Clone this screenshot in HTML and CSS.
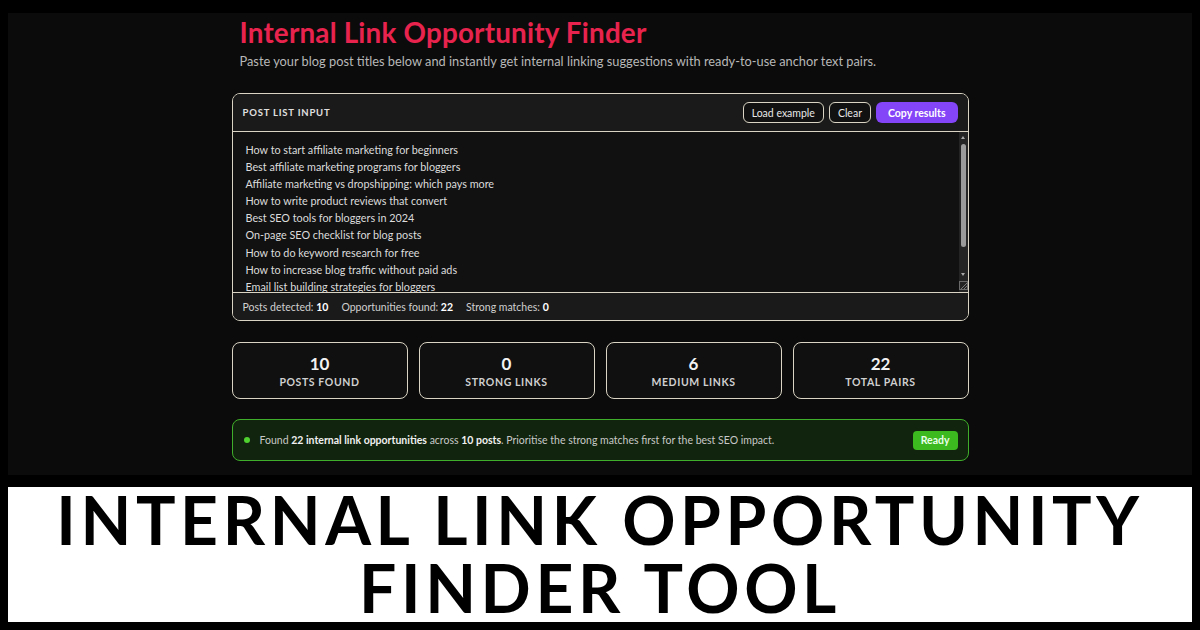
FILE: index.html
```html
<!DOCTYPE html>
<html lang="en">
<head>
<meta charset="utf-8">
<title>Internal Link Opportunity Finder</title>
<link rel="stylesheet" href="styles.css">
</head>
<body>
<div class="panel">
  <div class="col">
    <h1 class="title">Internal Link Opportunity Finder</h1>
    <p class="subtitle">Paste your blog post titles below and instantly get internal linking suggestions with ready-to-use anchor text pairs.</p>

    <section class="card">
      <div class="card-head">
        <span class="card-label">POST LIST INPUT</span>
        <div class="actions">
          <button class="btn btn-outline">Load example</button>
          <button class="btn btn-outline">Clear</button>
          <button class="btn btn-primary">Copy results</button>
        </div>
      </div>
      <div class="input-area">
        <textarea class="posts" spellcheck="false">How to start affiliate marketing for beginners
Best affiliate marketing programs for bloggers
Affiliate marketing vs dropshipping: which pays more
How to write product reviews that convert
Best SEO tools for bloggers in 2024
On-page SEO checklist for blog posts
How to do keyword research for free
How to increase blog traffic without paid ads
Email list building strategies for bloggers
How to monetise a blog with affiliate links</textarea>
        <div class="sb" aria-hidden="true">
          <span class="sb-up"></span>
          <span class="sb-thumb"></span>
          <span class="sb-fill"></span>
          <span class="sb-down"></span>
          <span class="sb-grip"></span>
        </div>
      </div>
      <div class="card-foot">
        <span>Posts detected: <b>10</b></span>
        <span>Opportunities found: <b>22</b></span>
        <span>Strong matches: <b>0</b></span>
      </div>
    </section>

    <div class="stats">
      <div class="stat"><div class="num">10</div><div class="lbl">POSTS FOUND</div></div>
      <div class="stat"><div class="num">0</div><div class="lbl">STRONG LINKS</div></div>
      <div class="stat"><div class="num">6</div><div class="lbl">MEDIUM LINKS</div></div>
      <div class="stat"><div class="num">22</div><div class="lbl">TOTAL PAIRS</div></div>
    </div>

    <div class="banner">
      <span class="dot"></span>
      <span class="msg">Found <b>22 internal link opportunities</b> across <b>10 posts</b>. Prioritise the strong matches first for the best SEO impact.</span>
      <span class="pill">Ready</span>
    </div>
  </div>
</div>
<div class="caption">
  <h2 class="cap-line">INTERNAL LINK OPPORTUNITY</h2>
  <h2 class="cap-line">FINDER TOOL</h2>
</div>
</body>
</html>
```

FILE: styles.css
```css
* { box-sizing: border-box; }
html, body { margin: 0; padding: 0; }
body {
  width: 1200px;
  height: 630px;
  background: #000;
  font-family: "Lato", "Open Sans", sans-serif;
  color: #e6e6e6;
  overflow: hidden;
  padding: 13px 8px 0;
}
.panel {
  height: 462px;
  background: #0b0b0b;
  display: flex;
  justify-content: center;
}
.col {
  width: 737px;
  padding-top: 3px;
}
.title {
  margin: 0 0 0 8px;
  font-size: 27.8px;
  font-weight: 700;
  color: #e8234d;
  line-height: 34px;
  letter-spacing: 0.2px;
}
.subtitle {
  margin: 2px 0 0 8px;
  font-size: 12.8px;
  color: #b8b8b8;
  line-height: 18px;
}
.card {
  margin-top: 23px;
  border: 1.5px solid #d9d4c3;
  border-radius: 8px;
  background: #111;
  overflow: hidden;
  display: flex;
  flex-direction: column;
}
.card-head {
  height: 38px;
  background: #1a1a1a;
  border-bottom: 1.5px solid #d9d4c3;
  display: flex;
  align-items: center;
  justify-content: space-between;
  padding: 0 10px 0 10px;
}
.card-label {
  font-size: 9.5px;
  font-weight: 700;
  letter-spacing: 0.8px;
  color: #e0e0e0;
}
.actions { display: flex; gap: 5px; }
.btn {
  font-family: inherit;
  font-size: 10.5px;
  height: 21px;
  border-radius: 6px;
  padding: 0 8px;
  cursor: pointer;
}
.btn-outline {
  background: #111;
  color: #e8e8e8;
  border: 1.5px solid #d9d4c3;
}
.btn-primary {
  background: #8345f7;
  color: #fff;
  border: none;
  font-weight: 700;
  padding: 0 12px;
}
.input-area {
  display: flex;
  height: 160px;
  background: #111;
}
.posts {
  flex: 1;
  display: block;
  height: 100%;
  margin: 0;
  border: none;
  outline: none;
  resize: none;
  background: #111;
  color: #dcdcdc;
  font-family: inherit;
  font-size: 10.8px;
  line-height: 17.1px;
  padding: 9px 13px 0;
  overflow: hidden;
}
.sb {
  width: 9px;
  flex: none;
  background: #242424;
  display: flex;
  flex-direction: column;
  align-items: center;
  padding: 4px 0 2px;
}
.sb-up, .sb-down {
  width: 0;
  height: 0;
  border-left: 2.5px solid transparent;
  border-right: 2.5px solid transparent;
}
.sb-up { border-bottom: 3px solid #a8a8a8; }
.sb-down { border-top: 3px solid #a8a8a8; }
.sb-thumb {
  margin-top: 5px;
  width: 5px;
  height: 103px;
  border-radius: 3px;
  background: #9a9a9a;
}
.sb-fill { flex: 1; }
.sb-grip {
  margin-top: 5px;
  width: 9px;
  height: 9px;
  border: 1px solid #6a6a6a;
  background: linear-gradient(135deg, transparent 55%, #777 55%, #777 62%, transparent 62%, transparent 75%, #777 75%, #777 82%, transparent 82%);
}
.card-foot {
  height: 28px;
  background: #1a1a1a;
  border-top: 1.5px solid #d9d4c3;
  display: flex;
  align-items: center;
  gap: 13px;
  padding: 0 10px;
  font-size: 10.5px;
  color: #d0d0d0;
}
.card-foot b { color: #fff; }
.stats {
  margin-top: 21px;
  display: grid;
  grid-template-columns: repeat(4, 1fr);
  gap: 11px;
}
.stat {
  height: 57px;
  border: 1.5px solid #d9d4c3;
  border-radius: 8px;
  background: #101010;
  display: flex;
  flex-direction: column;
  align-items: center;
  justify-content: center;
}
.num {
  font-size: 17px;
  font-weight: 700;
  color: #f2f2f2;
  line-height: 20px;
}
.lbl {
  margin-top: 2px;
  font-size: 10.5px;
  font-weight: 700;
  letter-spacing: 0.6px;
  color: #cfcfcf;
}
.banner {
  margin-top: 20px;
  height: 42px;
  border: 1.5px solid #3fae2a;
  border-radius: 8px;
  background: #11240d;
  display: flex;
  align-items: center;
  padding: 0 10px 0 11px;
  font-size: 10.5px;
  color: #c8c8c8;
}
.dot {
  width: 6px;
  height: 6px;
  border-radius: 50%;
  background: #4fd12f;
  flex: none;
}
.msg { margin-left: 10px; flex: 1; }
.msg b { color: #f0f0f0; }
.pill {
  background: #3bb91e;
  color: #eaffea;
  font-weight: 700;
  font-size: 10.5px;
  height: 19px;
  line-height: 19px;
  padding: 0 8px;
  border-radius: 4px;
}
.caption {
  margin-top: 12px;
  height: 135px;
  background: #fff;
  display: flex;
  flex-direction: column;
  align-items: center;
  justify-content: center;
}
.cap-line {
  margin: 0;
  text-align: center;
  font-family: "Lato", sans-serif;
  font-weight: 700;
  font-size: 66px;
  line-height: 66px;
  height: 68px;
  letter-spacing: 4.6px;
  color: #000;
  white-space: nowrap;
}
```
